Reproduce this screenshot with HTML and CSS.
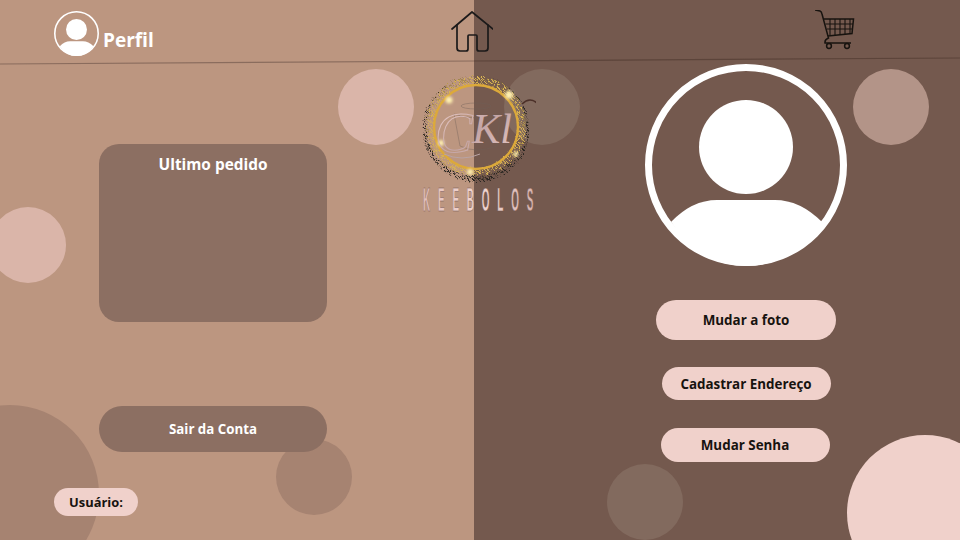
FILE: index.html
```html
<!DOCTYPE html>
<html lang="pt-BR">
<head>
    <meta charset="UTF-8">
    <title>Perfil - Keebolos</title>
    <link rel="stylesheet" href="styles.css">
</head>
<body>
    <div class="page">
        <!-- bolas do fundo -->
        <div class="ball ball-a"></div>
        <div class="ball ball-b"></div>
        <div class="ball ball-c"></div>
        <div class="ball ball-d"></div>
        <div class="ball ball-e"></div>
        <div class="ball ball-f"></div>
        <div class="ball ball-g"></div>
        <div class="ball ball-h"></div>

        <svg class="top-line" width="960" height="10" viewBox="0 0 960 10">
            <line x1="0" y1="8" x2="474" y2="5" stroke="#8a6c5d" stroke-width="1.2"/>
            <line x1="474" y1="5" x2="960" y2="2" stroke="#5c443a" stroke-width="1.2"/>
        </svg>

        <header class="topbar">
            <a class="profile-link">
                <svg class="avatar-small" viewBox="0 0 202 202">
                    <use href="#avatar"/>
                </svg>
                <span>Perfil</span>
            </a>
            <svg class="home-icon" width="42" height="42" viewBox="0 0 42 42" fill="none" stroke="#1c1a1a" stroke-width="1.700" stroke-linejoin="round" stroke-linecap="round">
                <path d="M1 18 L21 1 L42 18"/>
                <path d="M6 14 V37 Q6 40 9 40 H15 Q17 40 17 38 V25 Q17 24 18 24 H25 Q26 24 26 25 V38 Q26 40 28 40 H34 Q37 40 37 37 V14"/>
            </svg>
            <svg class="cart-icon" width="40" height="40" viewBox="0 0 40 40" fill="none" stroke="#17130f" stroke-width="1.1">
                <path d="M0 0 L5 1 Q6.500 1.500 7 4 L13.500 28 Q9.500 29.500 10 33 H36" stroke-width="1.5"/>
                <path d="M9 9 H38.500 L37 23.500 L13 26" stroke-width="1.5"/>
                <path d="M10.500 14 H38 M12 19 H37.500 M15 9 V25 M20 9 V25 M25 9 V24.500 M30 9 V24 M35 9 V24"/>
                <circle cx="14" cy="36" r="2.400" stroke-width="1.5"/>
                <circle cx="32" cy="36" r="2.400" stroke-width="1.5"/>
            </svg>
        </header>

        <div class="columns">
            <section class="col-left">
                <div class="last-order">Ultimo pedido</div>
                <button class="logout">Sair da Conta</button>
                <div class="user-pill">Usuário:</div>
            </section>
            <section class="col-right">
                <svg class="avatar-big" width="202" height="202" viewBox="0 0 202 202">
                    <defs>
                        <g id="avatar">
                            <circle cx="101" cy="101" r="97.500" fill="none" stroke="#fff" stroke-width="7"/>
                            <circle cx="101" cy="83" r="47" fill="#fff"/>
                            <path d="M26 158 Q47 136 72 136 H130 Q155 136 177 158 Q147 202 101 202 Q55 202 26 158 Z" fill="#fff"/>
                        </g>
                    </defs>
                    <use href="#avatar"/>
                </svg>
                <button class="btn btn-photo">Mudar a foto</button>
                <button class="btn btn-address">Cadastrar Endereço</button>
                <button class="btn btn-pass">Mudar Senha</button>
            </section>
        </div>

        <svg class="logo" width="130" height="150" viewBox="0 0 130 150">
            <defs>
                <filter id="glitter" x="-20%" y="-20%" width="140%" height="140%">
                    <feTurbulence type="fractalNoise" baseFrequency="0.8" numOctaves="2" seed="7" result="noise"/>
                    <feColorMatrix in="noise" type="matrix" values="0 0 0 0 0  0 0 0 0 0  0 0 0 0 0  7 0 0 0 -3.400" result="speck"/>
                    <feComposite in="SourceGraphic" in2="speck" operator="in" result="dots"/>
                    <feDisplacementMap in="dots" in2="noise" scale="5"/>
                </filter>
                <filter id="soft" x="-50%" y="-50%" width="200%" height="200%"><feGaussianBlur stdDeviation="1.500"/></filter>
                <linearGradient id="rose" x1="0" y1="0" x2="1" y2="1">
                    <stop offset="0" stop-color="#f3d5cf"/>
                    <stop offset="0.5" stop-color="#c4a5a6"/>
                    <stop offset="1" stop-color="#e9cbc6"/>
                </linearGradient>
                <linearGradient id="letters" x1="0" y1="0" x2="1" y2="0">
                    <stop offset="0" stop-color="#e3bfba"/>
                    <stop offset="0.5" stop-color="#f3d8d2"/>
                    <stop offset="1" stop-color="#d8b5b0"/>
                </linearGradient>
            </defs>
            <path d="M116 34 Q124 26 132 34" fill="none" stroke="#4c3029" stroke-width="1.500"/>
            <g fill="none" stroke="#6f5f58" stroke-width="0.8" opacity="0.5">
                <ellipse cx="70" cy="36" rx="15" ry="3"/>
                <path d="M48 44 Q70 52 94 44 L91 76 Q70 84 54 76 Z"/>
            </g>
            <circle cx="70" cy="59" r="50" fill="none" stroke="#2a2620" stroke-width="6" filter="url(#glitter)"/>
            <circle cx="70" cy="56" r="46" fill="none" stroke="#d7b254" stroke-width="8" filter="url(#glitter)"/>
            <circle cx="70" cy="57" r="42" fill="none" stroke="#dca93a" stroke-width="2.400"/>
            <g fill="#fff0b0" filter="url(#soft)">
                <circle cx="43" cy="30" r="3.500"/>
                <circle cx="103" cy="25" r="4"/>
                <circle cx="35" cy="73" r="3"/>
                <circle cx="110" cy="84" r="2.500"/>
                <circle cx="64" cy="102" r="3"/>
            </g>
            <path d="M38 84 Q56 92 74 84" fill="none" stroke="#b9a3a3" stroke-width="1"/>
            <text class="logo-mark" x="29" y="82"><tspan class="logo-swash">C</tspan><tspan y="73">Kl</tspan></text>
            <text class="logo-name" transform="translate(17 141) scale(0.62 2.050)" textLength="178" lengthAdjust="spacing">KEEBOLOS</text>
        </svg>
    </div>
</body>
</html>
```

FILE: styles.css
```css
* {
    box-sizing: border-box;
}
body {
    margin: 0;
    font-family: "Open Sans", "Liberation Sans", sans-serif;
}
.page {
    position: relative;
    width: 960px;
    height: 540px;
    overflow: hidden;
    background: linear-gradient(90deg, #bc9680 474px, #74594e 474px);
}
.ball {
    position: absolute;
    width: 76px;
    height: 76px;
    border-radius: 50%;
}
.ball-a { left: 337.500px; top: 69px; background-color: #dab5a9; }
.ball-b { left: 504px; top: 69px; background-color: #826a5e; }
.ball-c { left: 852.500px; top: 69px; background-color: #b39488; }
.ball-d { left: -10px; top: 207px; background-color: #dab5a9; }
.ball-e { left: 276px; top: 439px; background-color: #a68371; }
.ball-f { left: -79px; top: 405px; width: 178px; height: 178px; background-color: #a68371; }
.ball-g { left: 607px; top: 464px; background-color: #826a5e; }
.ball-h { left: 847px; top: 435px; width: 156px; height: 156px; background-color: #f0d1cb; }

.top-line {
    position: absolute;
    left: 0;
    top: 56px;
}
.topbar {
    position: relative;
    height: 64px;
    display: flex;
    align-items: flex-start;
    padding: 11px 0 0 54px;
}
.profile-link {
    width: 397px;
    display: flex;
    align-items: flex-end;
    gap: 4px;
    color: #fff;
    font-size: 19px;
    font-weight: 700;
    line-height: 26px;
}
.profile-link span {
    padding-bottom: 3px;
}
.avatar-small {
    width: 45px;
    height: 45px;
}
.cart-icon {
    margin: -1px 0 0 322px;
}
.columns {
    position: relative;
    display: flex;
    height: 476px;
}
.col-left {
    width: 474px;
    display: flex;
    flex-direction: column;
    align-items: flex-start;
    padding: 80px 0 0 54px;
}
.col-right {
    flex: 1;
    display: flex;
    flex-direction: column;
    align-items: center;
    padding-left: 58px;
}
.last-order {
    width: 228px;
    height: 178px;
    margin-left: 45px;
    padding-top: 10px;
    border-radius: 20px;
    background-color: #8c6f62;
    color: #fff;
    font-size: 15.400px;
    font-weight: 700;
    line-height: 22px;
    text-align: center;
}
.logout {
    width: 228px;
    height: 46px;
    margin: 84px 0 0 45px;
    border: 0;
    border-radius: 23px;
    background-color: #8c6f62;
    color: #fff;
    font-family: inherit;
    font-size: 13.300px;
    font-weight: 700;
}
.user-pill {
    width: 84px;
    height: 28px;
    margin-top: 36px;
    border-radius: 14px;
    background-color: #f0d1cb;
    color: #17130f;
    font-size: 12.900px;
    font-weight: 700;
    line-height: 28px;
    text-align: center;
}
.avatar-big {
    flex: none;
}
.btn {
    flex: none;
    border: 0;
    background-color: #f0d1cb;
    color: #17130f;
    font-family: inherit;
    font-size: 13.400px;
    font-weight: 700;
    padding: 0;
}
.btn-photo {
    width: 180px;
    height: 40px;
    margin-top: 34px;
    border-radius: 20px;
}
.btn-address {
    width: 169px;
    height: 33px;
    margin-top: 27px;
    border-radius: 17px;
}
.btn-pass {
    width: 169px;
    height: 34px;
    margin-top: 28px;
    margin-left: -2px;
    border-radius: 17px;
}
.logo {
    position: absolute;
    left: 406px;
    top: 70px;
}
.logo-mark {
    font-family: "Liberation Serif", serif;
    font-style: italic;
    font-size: 42px;
    fill: url(#rose);
}
.logo-swash {
    font-size: 56px;
    fill: none;
    stroke: url(#rose);
    stroke-width: 1;
}
.logo-name {
    font-family: "Liberation Sans", sans-serif;
    font-weight: 700;
    font-size: 16px;
    fill: url(#letters);
    stroke: #6d4d4a;
    stroke-width: 0.250;
}
```
